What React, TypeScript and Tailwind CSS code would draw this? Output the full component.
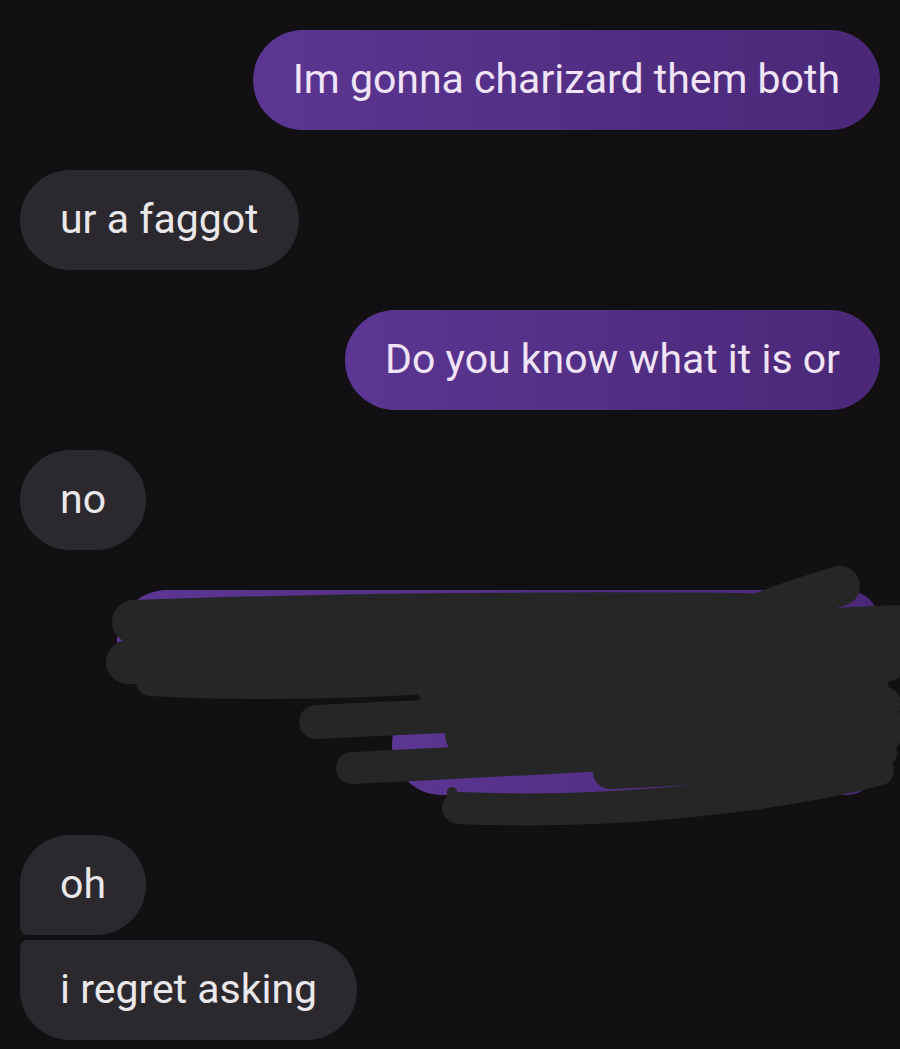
import React from "react";

const sentBubble =
  "h-[100px] flex items-center px-10 text-[41px] text-[#f1e4f7] bg-linear-to-r from-[#5b3693] to-[#4a2877]";
const recvBubble = "h-[100px] flex items-center px-10 text-[41px] text-[#ebe8ec] bg-[#2b292d]";

const Scribble = () => {
  return (
    <svg
      className="absolute left-[-20px] top-[-30px] w-[900px] h-[280px] overflow-visible pointer-events-none"
      viewBox="0 560 900 280"
      fill="none"
      stroke="#262626"
      strokeLinecap="round"
      strokeLinejoin="round"
    >
      {/* upper mass */}
      <path d="M134 622 C300 616 560 612 800 616" strokeWidth="44" />
      <path d="M128 662 C260 660 440 656 600 654" strokeWidth="44" />
      <path d="M150 682 C260 688 360 684 430 680" strokeWidth="28" />
      <path d="M300 648 C480 645 700 645 880 650" strokeWidth="66" />
      <path d="M620 672 C700 640 760 608 840 586" strokeWidth="40" />
      <path d="M720 628 C790 626 850 622 896 620" strokeWidth="30" />
      <path d="M840 660 C890 690 895 730 860 756" strokeWidth="30" />
      <path d="M430 690 C600 692 760 692 872 690" strokeWidth="26" />
      {/* lower mass */}
      <path d="M316 722 C480 714 700 706 884 704" strokeWidth="34" />
      <path d="M470 734 C600 732 760 730 880 728" strokeWidth="50" />
      <path d="M352 768 C520 760 720 748 880 742" strokeWidth="32" />
      <path d="M610 772 C700 768 800 764 880 752" strokeWidth="34" />
      <path d="M458 808 C600 814 760 800 878 770" strokeWidth="32" />
      <path d="M452 792 L452 816" strokeWidth="10" />
    </svg>
  );
};

export default function App() {
  return (
    <div className="min-h-screen bg-[#121013] font-['Roboto',sans-serif]">
      <div className="flex flex-col gap-10 px-5 pt-[30px]">
        <div className={`${sentBubble} self-end rounded-full`}>Im gonna charizard them both</div>
        <div className={`${recvBubble} self-start rounded-full`}>ur a faggot</div>
        <div className={`${sentBubble} self-end rounded-full`}>Do you know what it is or</div>
        <div className={`${recvBubble} self-start rounded-full`}>no</div>

        <div className="relative flex flex-col items-end gap-[5px]">
          <div className={`${sentBubble} w-[763px] rounded-l-[50px] rounded-tr-[34px] rounded-br-[8px]`} />
          <div className={`${sentBubble} w-[488px] rounded-l-[50px] rounded-tr-[8px] rounded-br-[34px]`} />
          <Scribble />
        </div>

        <div className="flex flex-col items-start gap-[5px]">
          <div className={`${recvBubble} rounded-tl-[50px] rounded-bl-[8px] rounded-r-[50px]`}>oh</div>
          <div className={`${recvBubble} rounded-tl-[8px] rounded-bl-[50px] rounded-r-[50px]`}>i regret asking</div>
        </div>
      </div>
    </div>
  );
}
